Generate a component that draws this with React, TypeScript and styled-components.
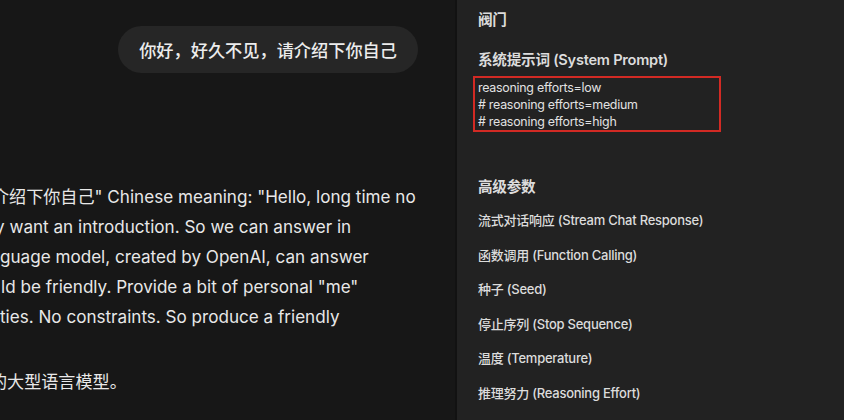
import React from 'react';
import styled, { createGlobalStyle } from 'styled-components';

const GlobalStyle = createGlobalStyle`
  html, body {
    margin: 0;
    padding: 0;
    background: #171717;
  }
  body {
    font-family: Inter, "Noto Sans CJK SC", sans-serif;
  }
`;

const Screen = styled.div`
  display: flex;
  width: 844px;
  height: 420px;
  overflow: hidden;
`;

const ChatPane = styled.div`
  width: 455px;
  flex-shrink: 0;
  background: #171717;
  overflow: hidden;
  border-right: 2px solid #121212;
`;

const UserRow = styled.div`
  display: flex;
  justify-content: flex-end;
  padding: 26px 37px 0 0;
`;

const Bubble = styled.div`
  background: #262626;
  color: #ececec;
  border-radius: 24px;
  height: 47px;
  padding: 0 21px;
  display: flex;
  align-items: center;
  font-size: 17.2px;
  font-family: "Noto Sans CJK SC", sans-serif;
  font-weight: 500;
`;

const Answer = styled.div`
  margin-top: 109px;
  color: #e8e8e8;
  font-size: 17.1px;
`;

const Line = styled.div<{ $shift: number; $gap?: number }>`
  white-space: nowrap;
  line-height: 30px;
  height: 30px;
  margin-left: ${p => p.$shift}px;
  margin-top: ${p => p.$gap ?? 0}px;
`;

const SidePane = styled.div`
  flex: 1;
  background: #222222;
  padding: 10px 0 0 21px;
  color: #dcdcdc;
  letter-spacing: -0.25px;
`;

const Heading = styled.div<{ $top?: number }>`
  font-size: 14.6px;
  font-weight: 600;
  line-height: 20px;
  margin-top: ${p => p.$top ?? 0}px;
`;

const PromptBox = styled.div`
  margin: 6px 0 0 -5px;
  width: 238px;
  border: 2px solid #d22a24;
  padding: 1px 3px 0;
  font-size: 12.4px;
  line-height: 17px;
  color: #e2e2e2;
`;

const ParamList = styled.div`
  display: flex;
  flex-direction: column;
  gap: 14.6px;
  margin-top: 13px;
`;

const Param = styled.div`
  font-size: 13px;
  font-weight: 500;
  line-height: 20px;
`;

const params = [
  '流式对话响应 (Stream Chat Response)',
  '函数调用 (Function Calling)',
  '种子 (Seed)',
  '停止序列 (Stop Sequence)',
  '温度 (Temperature)',
  '推理努力 (Reasoning Effort)',
];

export default function App() {
  return (
    <>
      <GlobalStyle />
      <Screen>
        <ChatPane>
          <UserRow>
            <Bubble>你好，好久不见，请介绍下你自己</Bubble>
          </UserRow>
          <Answer>
            <Line $shift={-8}>介绍下你自己" Chinese meaning: "Hello, long time no</Line>
            <Line $shift={-5}>y want an introduction. So we can answer in</Line>
            <Line $shift={0}>guage model, created by OpenAI, can answer</Line>
            <Line $shift={1}>ld be friendly. Provide a bit of personal "me"</Line>
            <Line $shift={0}>ties. No constraints. So produce a friendly</Line>
            <Line $shift={-10} $gap={35}>的大型语言模型。</Line>
          </Answer>
        </ChatPane>
        <SidePane>
          <Heading>阀门</Heading>
          <Heading $top={20}>系统提示词 (System Prompt)</Heading>
          <PromptBox>
            <div>reasoning efforts=low</div>
            <div># reasoning efforts=medium</div>
            <div># reasoning efforts=high</div>
          </PromptBox>
          <Heading $top={45}>高级参数</Heading>
          <ParamList>
            {params.map(p => (
              <Param key={p}>{p}</Param>
            ))}
          </ParamList>
        </SidePane>
      </Screen>
    </>
  );
}
